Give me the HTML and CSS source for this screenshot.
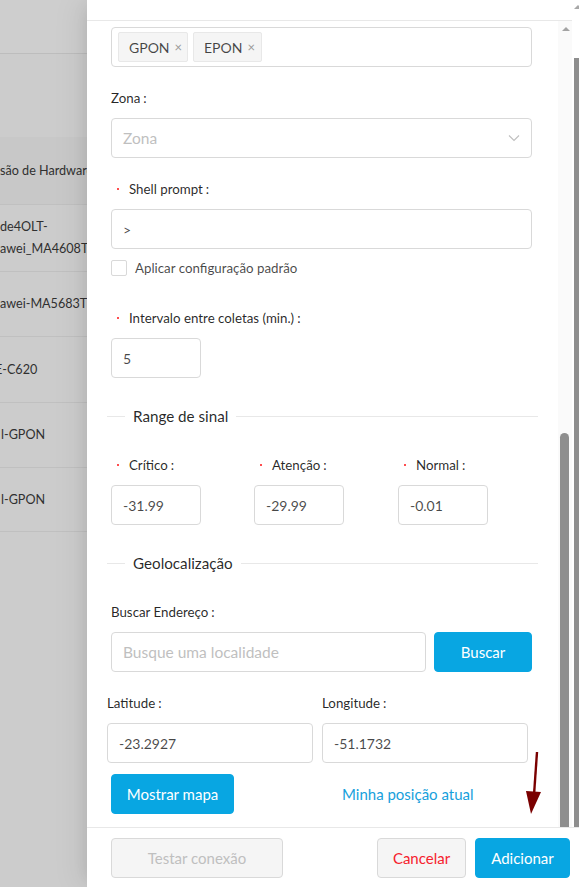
FILE: index.html
```html
<!DOCTYPE html>
<html lang="pt-BR">
<head>
<meta charset="utf-8">
<title>Adicionar OLT</title>
<link rel="stylesheet" href="styles.css">
</head>
<body>
<div class="screen">
  <div class="backdrop">
    <div class="bg-top"></div>
    <div class="bg-mid"></div>
    <div class="bg-th"><span class="bg-txt">são de Hardware</span></div>
    <div class="bg-row r1"><span class="bg-txt">de4OLT-<br>awei_MA4608T</span></div>
    <div class="bg-row r2"><span class="bg-txt">awei-MA5683T</span></div>
    <div class="bg-row r3"><span class="bg-txt cut">E-C620</span></div>
    <div class="bg-row r4"><span class="bg-txt cut2">l-GPON</span></div>
    <div class="bg-row r5"><span class="bg-txt cut2">l-GPON</span></div>
  </div>

  <div class="drawer">
    <div class="drawer-top">
      <div class="drawer-main">
        <div class="drawer-head"></div>
        <div class="drawer-body">
          <div class="form">
            <div class="tags-input">
              <span class="tag">GPON <span class="tag-x">×</span></span>
              <span class="tag">EPON <span class="tag-x">×</span></span>
            </div>

            <div class="item">
              <div class="label">Zona<span class="colon">:</span></div>
              <div class="input select">
                <span class="placeholder">Zona</span>
                <svg class="chev" width="12" height="8" viewBox="0 0 12 8"><path d="M1 1.5 L6 6.5 L11 1.5" fill="none" stroke="#bfbfbf" stroke-width="1.1"/></svg>
              </div>
            </div>

            <div class="item">
              <div class="label"><span class="req"></span>Shell prompt<span class="colon">:</span></div>
              <div class="input">&gt;</div>
              <div class="check-row"><span class="checkbox"></span><span>Aplicar configuração padrão</span></div>
            </div>

            <div class="item item-interval">
              <div class="label"><span class="req"></span>Intervalo entre coletas (min.)<span class="colon">:</span></div>
              <div class="input small">5</div>
            </div>

            <div class="divider"><span class="div-line short"></span><span class="div-text">Range de sinal</span><span class="div-line long"></span></div>

            <div class="cols">
              <div class="col">
                <div class="label"><span class="req"></span>Crítico<span class="colon">:</span></div>
                <div class="input small">-31.99</div>
              </div>
              <div class="col">
                <div class="label"><span class="req"></span>Atenção<span class="colon">:</span></div>
                <div class="input small">-29.99</div>
              </div>
              <div class="col">
                <div class="label"><span class="req"></span>Normal<span class="colon">:</span></div>
                <div class="input small">-0.01</div>
              </div>
            </div>

            <div class="divider geo"><span class="div-line short"></span><span class="div-text">Geolocalização</span><span class="div-line long"></span></div>

            <div class="item item-search">
              <div class="label">Buscar Endereço<span class="colon">:</span></div>
              <div class="search-row">
                <div class="input search"><span class="placeholder">Busque uma localidade</span></div>
                <button class="btn primary buscar">Buscar</button>
              </div>
            </div>

            <div class="latlon">
              <div class="ll">
                <div class="label">Latitude<span class="colon">:</span></div>
                <div class="input">-23.2927</div>
              </div>
              <div class="ll">
                <div class="label">Longitude<span class="colon">:</span></div>
                <div class="input">-51.1732</div>
              </div>
            </div>

            <div class="map-row">
              <button class="btn primary mapa">Mostrar mapa</button>
              <span class="link">Minha posição atual</span>
            </div>
          </div>
          <div class="inner-scroll">
            <span class="arrow-up"></span>
            <span class="thumb"></span>
          </div>
        </div>
      </div>
      <div class="outer-scroll">
        <span class="arrow-up small-arrow"></span>
        <span class="outer-thumb"></span>
      </div>
    </div>

    <div class="footer">
      <button class="btn disabled testar">Testar conexão</button>
      <span class="spacer"></span>
      <button class="btn cancel">Cancelar</button>
      <button class="btn primary add">Adicionar</button>
    </div>

    <svg class="annot-arrow" width="30" height="70" viewBox="0 0 30 70">
      <line x1="14" y1="1" x2="11" y2="44" stroke="#7a0000" stroke-width="2.4"/>
      <polygon points="3,40 18,41 8,63" fill="#7a0000"/>
    </svg>
  </div>
</div>
</body>
</html>
```

FILE: styles.css
```css
* { box-sizing: border-box; }
html, body { margin: 0; padding: 0; }
body {
  width: 579px;
  height: 887px;
  overflow: hidden;
  background: #fff;
  font-family: "Source Sans Pro", Lato, "Liberation Sans", sans-serif;
  color: rgba(0,0,0,0.85);
}
.screen {
  display: flex;
  width: 579px;
  height: 887px;
  position: relative;
}

/* backdrop page */
.backdrop {
  width: 87px;
  flex: none;
  background: #cccccc;
  overflow: hidden;
  font-size: 12.6px;
  color: #303030;
}
.bg-top { height: 54px; background: #cecece; border-bottom: 1px solid #bdbdbd; }
.bg-mid { height: 83px; background: #cccccc; }
.bg-th {
  height: 68px;
  background: #c8c8c8;
  border-bottom: 1px solid #c0c0c0;
  display: flex;
  align-items: center;
}
.bg-row {
  border-bottom: 1px solid #c0c0c0;
  display: flex;
  align-items: center;
}
.r1 { height: 67px; }
.r2 { height: 65px; }
.r3 { height: 66px; }
.r4 { height: 65px; }
.r5 { height: 64px; }
.bg-txt { white-space: nowrap; line-height: 22px; }
.cut { margin-left: -5px; }
.cut2 { margin-left: 1px; }

/* drawer */
.drawer {
  flex: 1;
  display: flex;
  flex-direction: column;
  background: #fff;
  position: relative;
  box-shadow: -6px 0 16px -8px rgba(0,0,0,0.12), -9px 0 28px 0 rgba(0,0,0,0.06);
}
.drawer-top {
  flex: 1;
  display: flex;
  min-height: 0;
}
.drawer-main {
  flex: 1;
  display: flex;
  flex-direction: column;
}
.drawer-head {
  height: 21px;
  border-bottom: 1px solid #e8e8e8;
  flex: none;
}
.drawer-body {
  flex: 1;
  display: flex;
  min-height: 0;
  overflow: hidden;
}
.form {
  flex: 1;
  padding: 6px 26px 0 24px;
  font-size: 13.3px;
}
.inner-scroll {
  width: 14px;
  flex: none;
  background: #fafafa;
  position: relative;
}
.arrow-up {
  position: absolute;
  left: 4px;
  top: 6px;
  width: 0; height: 0;
  border-left: 4px solid transparent;
  border-right: 4px solid transparent;
  border-bottom: 4px solid #a3a3a3;
}
.thumb {
  position: absolute;
  left: 2px;
  top: 412px;
  width: 9px;
  bottom: -10px;
  background: #8e8e8e;
  border-radius: 5px;
}
.outer-scroll {
  width: 7px;
  flex: none;
  position: relative;
  background: #fff;
}
.small-arrow { left: 2px; top: 5px; border-bottom-color: #a8a8a8; }
.outer-thumb {
  position: absolute;
  left: 2px;
  right: 0;
  top: 58px;
  bottom: 0;
  background: #8e8e8e;
}

/* form pieces */
.input {
  height: 40px;
  border: 1px solid #d9d9d9;
  border-radius: 4px;
  padding: 0 11px;
  display: flex;
  align-items: center;
  font-size: 14px;
  color: rgba(0,0,0,0.72);
  background: #fff;
}
.input.small { width: 90px; }
.placeholder { color: #bfbfbf; font-size: 15.5px; }
.select { justify-content: space-between; }

.tags-input {
  height: 40px;
  border: 1px solid #d9d9d9;
  border-radius: 4px;
  padding: 0 4px 0 6px;
  display: flex;
  align-items: center;
  gap: 5px;
}
.tag {
  height: 30px;
  width: 70px;
  background: #f5f5f5;
  border: 1px solid #e8e8e8;
  border-radius: 2px;
  padding: 0 0 0 10px;
  display: flex;
  align-items: center;
  font-size: 14px;
  color: rgba(0,0,0,0.72);
}
.tag + .tag { width: 69px; }
.tag-x { color: #9a9a9a; font-size: 13px; margin-left: 5px; }

.item { margin-top: 20px; }
.label {
  height: 22px;
  line-height: 22px;
  margin-bottom: 9px;
  font-size: 13.3px;
  color: rgba(0,0,0,0.85);
  display: flex;
  align-items: center;
  white-space: nowrap;
}
.colon { margin-left: 3px; }
.req {
  display: inline-block;
  width: 2px;
  height: 2px;
  background: #ff4d4f;
  margin: 0 10px 0 6px;
}
.check-row {
  margin-top: 11px;
  display: flex;
  align-items: center;
  height: 16px;
  font-size: 13.3px;
  color: rgba(0,0,0,0.72);
}
.checkbox {
  width: 16px; height: 16px;
  border: 1px solid #d9d9d9;
  border-radius: 2px;
  margin-right: 8px;
  background: #fff;
}
.item-interval { margin-top: 31px; }

.divider {
  margin: 27px -6px 0 -4px;
  display: flex;
  align-items: center;
  height: 22px;
}
.div-line { height: 1px; background: #e8e8e8; }
.div-line.short { width: 18px; flex: none; }
.div-line.long { flex: 1; }
.div-text { padding: 0 8px; font-size: 15.2px; color: rgba(0,0,0,0.85); line-height: 22px; }

.cols {
  margin-top: 27px;
  display: grid;
  grid-template-columns: 143px 144px 90px;
}
.divider.geo { margin-top: 27px; }
.item-search { margin-top: 27px; }
.search-row { display: flex; gap: 8px; }
.input.search { flex: 1; }

.btn {
  height: 40px;
  border-radius: 4px;
  border: 1px solid #d9d9d9;
  font-family: inherit;
  font-size: 15px;
  padding: 0;
  white-space: nowrap;
  background: #fff;
  cursor: pointer;
}
.btn.primary { background: #08a6e2; border-color: #08a6e2; color: #fff; }
.buscar { width: 98px; }

.latlon {
  margin: 20px 0 0 -4px;
  width: 421px;
  display: grid;
  grid-template-columns: 206px 206px;
  column-gap: 9px;
}
.map-row {
  margin-top: 11px;
  display: flex;
  align-items: center;
}
.mapa { width: 123px; }
.link { margin-left: 108px; color: #17a0dc; font-size: 15px; }

.footer {
  height: 60px;
  flex: none;
  border-top: 1px solid #e8e8e8;
  display: flex;
  align-items: center;
  padding: 0 9px 0 24px;
  gap: 9px;
}
.spacer { flex: 1; }
.testar { width: 172px; background: #f5f5f5; color: #bfbfbf; }
.cancel { width: 89px; background: #f5f5f5; color: #f5222d; }
.add { width: 95px; }

.annot-arrow {
  position: absolute;
  left: 436px;
  top: 751px;
}
```
